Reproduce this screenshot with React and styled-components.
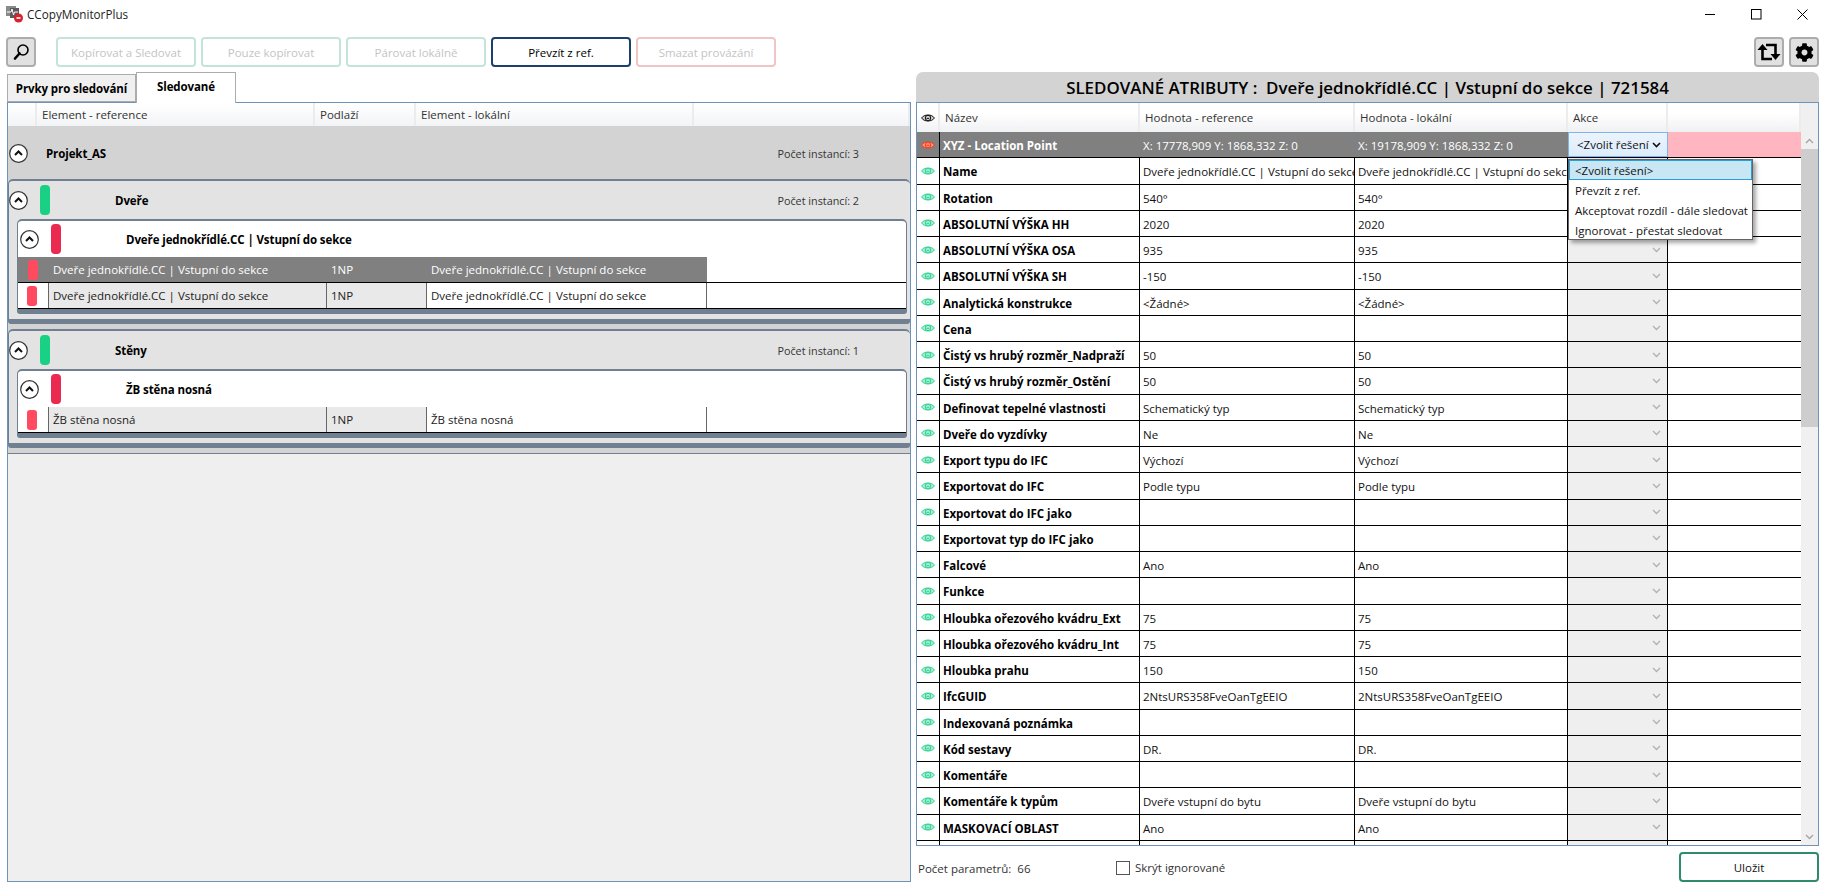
import React from 'react';
import styled, { createGlobalStyle } from 'styled-components';
import { FaCog } from 'react-icons/fa';

const GlobalStyle = createGlobalStyle`
	html, body {
		margin: 0;
		padding: 0;
		background: #fff;
		font-family: 'Open Sans', 'Liberation Sans', sans-serif;
		font-size: 11.5px;
		color: #111;
	}
	* {
		box-sizing: border-box;
	}
`;

const Window = styled.div`
	width: 1825px;
	height: 889px;
	display: flex;
	flex-direction: column;
	overflow: hidden;
	background: #fff;
`;

const TitleBar = styled.div`
	height: 28px;
	margin-bottom: 9px;
	display: flex;
	align-items: center;
	padding-left: 5px;
	font-size: 11.7px;
	color: #222;
`;

const AppName = styled.span`
	margin-left: 3px;
	flex: 1;
`;

const CaptionButton = styled.div`
	width: 46px;
	height: 28px;
	display: flex;
	align-items: center;
	justify-content: center;
`;

const Toolbar = styled.div`
	height: 30px;
	margin: 0 6px 5px;
	display: flex;
	align-items: stretch;
	gap: 5px;
`;

const IconButton = styled.button`
	width: 30px;
	padding: 0;
	display: flex;
	align-items: center;
	justify-content: center;
	background: #e1e1e1;
	border: 2px solid #adadad;
	border-radius: 4px;
	color: #000;
`;

const ActionButton = styled.button`
	width: 140px;
	padding: 0;
	background: #fff;
	border: 2px solid ${(props) => props.$border};
	border-radius: 4px;
	font: inherit;
	font-size: 11.5px;
	color: ${(props) => (props.$active ? '#000' : '#c4c4c4')};
	margin-left: ${(props) => (props.$first ? '15px' : '0')};
`;

const Spacer = styled.div`
	flex: 1;
`;

const Main = styled.div`
	flex: 1;
	min-height: 0;
	display: flex;
	padding: 0 6px 7px 7px;
	gap: 5px;
`;

const LeftSide = styled.div`
	width: 904px;
	display: flex;
	flex-direction: column;
`;

const Tabs = styled.div`
	height: 30px;
	display: flex;
	align-items: flex-end;
`;

const Tab = styled.div`
	height: ${(props) => (props.$active ? '31px' : '28px')};
	width: ${(props) => (props.$active ? '100px' : '129px')};
	margin-bottom: ${(props) => (props.$active ? '-1px' : '0')};
	position: relative;
	display: flex;
	align-items: center;
	justify-content: center;
	padding-bottom: ${(props) => (props.$active ? '4px' : '0')};
	font-size: 11.5px;
	letter-spacing: -0.1px;
	font-weight: 700;
	background: ${(props) => (props.$active ? '#fff' : '#f0f0f0')};
	border: 1px solid #acacac;
	border-bottom: ${(props) => (props.$active ? 'none' : '1px solid #acacac')};
	color: #000;
`;

const LeftPanel = styled.div`
	flex: 1;
	background: #efefef;
	border: 1px solid #6d93b8;
`;

const LeftHead = styled.div`
	height: 23px;
	display: grid;
	grid-template-columns: 29px 278px 101px 278px 1fr;
	background: linear-gradient(#ffffff, #f3f4f6);
	color: #333;
`;

const HeadCell = styled.div`
	display: flex;
	align-items: center;
	padding-left: 5px;
	border-right: 2px solid #ececec;
	white-space: nowrap;
`;

const ProjectGroup = styled.div`
	background: #d3d3d3;
	border-bottom: 1px solid #708090;
	padding-bottom: 5px;
`;

const GroupHeader = styled.div`
	height: ${(props) => props.$height}px;
	display: flex;
	align-items: center;
	padding-top: ${(props) => props.$top || 0}px;
	padding-left: ${(props) => props.$indent}px;
	padding-right: ${(props) => props.$right}px;
`;

const GroupTitle = styled.div`
	margin-left: ${(props) => props.$offset}px;
	flex: 1;
	font-size: 11.5px;
	letter-spacing: -0.1px;
	font-weight: 700;
	color: #000;
`;

const InstanceCount = styled.div`
	font-size: 10.8px;
	color: #333;
	white-space: nowrap;
`;

const CategoryGroup = styled.div`
	background: #e3e3e3;
	border: 1px solid #708090;
	border-top-width: 2px;
	border-bottom-width: 5px;
	border-right: none;
	border-radius: 5px 5px 3px 3px;
	margin-bottom: ${(props) => (props.$last ? '0' : '5px')};
	padding-bottom: 5px;
`;

const TypeGroup = styled.div`
	background: #fff;
	border: 1px solid #708090;
	border-top-width: 2px;
	border-bottom-width: 5px;
	border-radius: 5px 5px 3px 3px;
	width: 890px;
	margin-left: 8px;
`;

const StatusBar = styled.div`
	width: 10px;
	height: 30px;
	margin-left: 12px;
	border-radius: 4px;
	background: ${(props) => props.$color};
`;

const ElementRow = styled.div`
	height: 26px;
	display: grid;
	grid-template-columns: 31px 278px 100px 280px 1fr;
	border-bottom: 1.5px solid #000;
`;

const MarkCell = styled.div`
	display: flex;
	align-items: center;
	justify-content: center;
	padding-right: 2px;
	background: ${(props) => (props.$selected ? '#808080' : '#fff')};
	border-right: ${(props) => (props.$selected ? 'none' : '1px solid #666')};
`;

const RowMark = styled.div`
	width: 10px;
	height: 20px;
	border-radius: 3px;
	background: #ff4a5f;
`;

const ElementCell = styled.div`
	display: flex;
	align-items: center;
	padding-left: 4px;
	white-space: nowrap;
	overflow: hidden;
	color: ${(props) => (props.$selected ? '#fff' : '#222')};
	background: ${(props) => (props.$selected ? '#808080' : props.$shaded ? '#e9e9e9' : '#fff')};
	border-right: ${(props) => (props.$selected ? 'none' : '1px solid #666')};
`;

const RightSide = styled.div`
	flex: 1;
	min-width: 0;
	display: flex;
	flex-direction: column;
`;

const PanelTitle = styled.div`
	height: 30px;
	display: flex;
	align-items: center;
	justify-content: center;
	background: #d3d3d3;
	border-radius: 7px 7px 0 0;
	font-size: 16.9px;
	font-weight: 600;
	color: #000;
	white-space: pre;
`;

const AttributeTable = styled.div`
	height: 744px;
	display: flex;
	border: 1px solid #6d93b8;
	overflow: hidden;
`;

const TableBody = styled.div`
	flex: 1;
	min-width: 0;
`;

const AttributeHead = styled.div`
	height: 29px;
	display: grid;
	grid-template-columns: 23px 200px 215px 213px 100px 1fr;
	background: linear-gradient(#ffffff 35%, #f0f1f3);
	color: #333;
`;

const AttributeRow = styled.div`
	height: 26.26px;
	display: grid;
	grid-template-columns: 23px 200px 215px 213px 100px 1fr;
	background: ${(props) => (props.$selected ? '#808080' : '#fff')};
	border-bottom: 1.5px solid #000;
`;

const EyeCell = styled.div`
	display: flex;
	align-items: center;
	justify-content: center;
	border-right: ${(props) => (props.$head ? '2px solid #ececec' : '1px solid #000')};
`;

const NameCell = styled.div`
	display: flex;
	align-items: center;
	padding: 2px 0 0 3px;
	font-size: 11.5px;
	font-weight: 700;
	white-space: nowrap;
	overflow: hidden;
	color: ${(props) => (props.$selected ? '#fff' : '#000')};
	border-right: ${(props) => (props.$selected ? 'none' : '1px solid #000')};
`;

const ValueCell = styled.div`
	display: flex;
	align-items: center;
	padding: 2px 0 0 3px;
	white-space: nowrap;
	overflow: hidden;
	color: ${(props) => (props.$selected ? '#fff' : '#111')};
	border-right: ${(props) => (props.$selected ? 'none' : '1px solid #000')};
`;

const ActionCell = styled.div`
	position: relative;
	display: flex;
	align-items: center;
	justify-content: flex-end;
	padding-right: 6px;
	background: #efefef;
	color: #b0b0b0;
	border-right: 1px solid #000;
`;

const OpenCombo = styled.div`
	position: relative;
	display: flex;
	align-items: center;
	justify-content: space-between;
	padding: 0 6px 0 8px;
	color: #111;
	background: linear-gradient(#ecf4fc, #dcecfc);
	border: 1px solid #7eb4ea;
`;

const ComboPopup = styled.div`
	position: absolute;
	z-index: 2;
	left: -1px;
	top: 26px;
	width: 185px;
	height: 81px;
	padding: 0;
	background: #fff;
	border: 1px solid #646464;
	box-shadow: 3px 3px 4px rgba(0, 0, 0, 0.35);
`;

const PopupItem = styled.div`
	height: 20px;
	display: flex;
	align-items: center;
	padding-left: ${(props) => (props.$current ? '5px' : '6px')};
	white-space: nowrap;
	color: #111;
	background: ${(props) => (props.$current ? '#c9e6f5' : 'transparent')};
	border: ${(props) => (props.$current ? '1px solid #26a0da' : 'none')};
`;

const PinkCell = styled.div`
	background: #ffb6c1;
`;

const BlankCell = styled.div``;

const Scrollbar = styled.div`
	width: 17px;
	display: flex;
	flex-direction: column;
	align-items: stretch;
	background: #f0f0f0;
`;

const ScrollArrow = styled.div`
	height: 17px;
	display: flex;
	align-items: center;
	justify-content: center;
	color: #a3a3a3;
	margin-top: ${(props) => (props.$top ? '29px' : '0')};
`;

const ScrollThumb = styled.div`
	height: 278px;
	background: #cdcdcd;
`;

const Footer = styled.div`
	flex: 1;
	display: flex;
	align-items: flex-start;
	padding: 6px 0 0 2px;
`;

const ParamCount = styled.div`
	width: 198px;
	padding-top: 9px;
	color: #333;
	white-space: pre;
`;

const HideCheck = styled.label`
	display: flex;
	align-items: center;
	gap: 5px;
	padding-top: 8px;
	color: #333;
`;

const CheckBox = styled.span`
	width: 14px;
	height: 14px;
	background: #fff;
	border: 1px solid #555;
`;

const SaveButton = styled.button`
	width: 140px;
	height: 30px;
	padding: 0;
	background: #fff;
	border: 2px solid #2e8b6b;
	border-radius: 4px;
	font: inherit;
	color: #111;
`;

const Toggle = () => (
	<svg width='19' height='19' viewBox='0 0 19 19' style={{ flex: 'none' }}>
		<circle cx='9.5' cy='9.5' r='8.8' fill='#fff' stroke='#333' strokeWidth='1.2' />
		<path d='M6 11 L9.5 7.5 L13 11' fill='none' stroke='#111' strokeWidth='2' />
	</svg>
);

const Eye = ({ stroke, fill }) => (
	<svg width='14' height='10' viewBox='0 0 14 10'>
		<path d='M0.6 5 C3 1 11 1 13.4 5 C11 9 3 9 0.6 5 Z' fill={fill} stroke={stroke} strokeWidth='1' />
		<circle cx='7' cy='5' r='2.7' fill={fill} stroke={stroke} strokeWidth='1' />
		<path d='M5.6 5.4 H8.2' stroke={stroke} strokeWidth='1' />
	</svg>
);

const Chevron = ({ up, color = 'currentColor', width = 1.3 }) => (
	<svg width='9' height='6' viewBox='0 0 9 6'>
		<path d={up ? 'M1 5 L4.5 1.5 L8 5' : 'M1 1 L4.5 4.5 L8 1'} fill='none' stroke={color} strokeWidth={width} />
	</svg>
);

const AppIcon = () => (
	<svg width='19' height='19' viewBox='0 0 19 19'>
		<rect x='1' y='1' width='10' height='10' fill='#8a8a8a' />
		<rect x='5' y='3' width='9' height='10' fill='#5c5c5c' />
		<path d='M2 7 H6 L7 4 L8.5 10 L9.5 7 H13' fill='none' stroke='#fff' strokeWidth='1' />
		<circle cx='13.5' cy='13' r='4.5' fill='#d8232f' />
		<path d='M11.5 13 H15.5' stroke='#fff' strokeWidth='1.6' />
	</svg>
);

const SearchGlyph = () => (
	<svg width='20' height='20' viewBox='0 0 20 20'>
		<circle cx='12' cy='8' r='5' fill='none' stroke='#000' strokeWidth='1.6' />
		<path d='M8.5 11.5 L4 16.5' stroke='#000' strokeWidth='2.6' strokeLinecap='round' />
	</svg>
);

const RetweetGlyph = () => (
	<svg width='24' height='22' viewBox='0 0 24 22'>
		<path d='M5.5 8 V18 H15' fill='none' stroke='#000' strokeWidth='2.6' />
		<path d='M0.5 9 L5.5 3 L10.5 9 Z' fill='#000' />
		<path d='M9 4 H18.5 V14' fill='none' stroke='#000' strokeWidth='2.6' />
		<path d='M13.5 13 L18.5 19 L23.5 13 Z' fill='#000' />
	</svg>
);

const Minimize = () => (
	<svg width='11' height='11' viewBox='0 0 11 11'>
		<path d='M0 5.5 H10' stroke='#000' strokeWidth='1' />
	</svg>
);

const Maximize = () => (
	<svg width='11' height='11' viewBox='0 0 11 11'>
		<rect x='0.5' y='0.5' width='9.5' height='9.5' fill='none' stroke='#000' strokeWidth='1' />
	</svg>
);

const CloseGlyph = () => (
	<svg width='11' height='11' viewBox='0 0 11 11'>
		<path d='M0.5 0.5 L10.5 10.5 M10.5 0.5 L0.5 10.5' stroke='#000' strokeWidth='1' />
	</svg>
);

const DOOR = 'Dveře jednokřídlé.CC | Vstupní do sekce';
const WALL = 'ŽB stěna nosná';
const SCHEMA = 'Schematický typ';

const attributes = [
	['Name', DOOR],
	['Rotation', '540°'],
	['ABSOLUTNÍ VÝŠKA HH', '2020'],
	['ABSOLUTNÍ VÝŠKA OSA', '935'],
	['ABSOLUTNÍ VÝŠKA SH', '-150'],
	['Analytická konstrukce', '<Žádné>'],
	['Cena', ''],
	['Čistý vs hrubý rozměr_Nadpraží', '50'],
	['Čistý vs hrubý rozměr_Ostění', '50'],
	['Definovat tepelné vlastnosti', SCHEMA],
	['Dveře do vyzdívky', 'Ne'],
	['Export typu do IFC', 'Výchozí'],
	['Exportovat do IFC', 'Podle typu'],
	['Exportovat do IFC jako', ''],
	['Exportovat typ do IFC jako', ''],
	['Falcové', 'Ano'],
	['Funkce', ''],
	['Hloubka ořezového kvádru_Ext', '75'],
	['Hloubka ořezového kvádru_Int', '75'],
	['Hloubka prahu', '150'],
	['IfcGUID', '2NtsURS358FveOanTgEEIO'],
	['Indexovaná poznámka', ''],
	['Kód sestavy', 'DR.'],
	['Komentáře', ''],
	['Komentáře k typům', 'Dveře vstupní do bytu'],
	['MASKOVACÍ OBLAST', 'Ano'],
	['', ''],
];

const toolbarButtons = [
	['Kopírovat a Sledovat', '#c3e4da'],
	['Pouze kopírovat', '#c3e4da'],
	['Párovat lokálně', '#c3e4da'],
	['Převzít z ref.', '#1c3f6e', true],
	['Smazat provázání', '#efc5c5'],
];

const Element = ({ name, selected, shadeName }) => (
	<ElementRow>
		<MarkCell $selected={selected}>
			<RowMark />
		</MarkCell>
		<ElementCell $selected={selected} $shaded>
			{name}
		</ElementCell>
		<ElementCell $selected={selected} $shaded={shadeName}>
			1NP
		</ElementCell>
		<ElementCell $selected={selected}>{name}</ElementCell>
		<BlankCell />
	</ElementRow>
);

const CountedHeader = ({ title, count, bar, offset, height, indent, right, top }) => (
	<GroupHeader $height={height} $indent={indent} $right={right} $top={top}>
		<Toggle />
		{bar && <StatusBar $color={bar} />}
		<GroupTitle $offset={offset}>{title}</GroupTitle>
		{count && <InstanceCount>{count}</InstanceCount>}
	</GroupHeader>
);

export default function App() {
	return (
		<Window>
			<GlobalStyle />
			<TitleBar>
				<AppIcon />
				<AppName>CCopyMonitorPlus</AppName>
				<CaptionButton><Minimize /></CaptionButton>
				<CaptionButton><Maximize /></CaptionButton>
				<CaptionButton><CloseGlyph /></CaptionButton>
			</TitleBar>
			<Toolbar>
				<IconButton><SearchGlyph /></IconButton>
				{toolbarButtons.map(([label, border, active], i) => (
					<ActionButton key={label} $border={border} $active={active} $first={i === 0}>
						{label}
					</ActionButton>
				))}
				<Spacer />
				<IconButton><RetweetGlyph /></IconButton>
				<IconButton><FaCog size={19} /></IconButton>
			</Toolbar>
			<Main>
				<LeftSide>
					<Tabs>
						<Tab>Prvky pro sledování</Tab>
						<Tab $active>Sledované</Tab>
					</Tabs>
					<LeftPanel>
						<LeftHead>
							<HeadCell />
							<HeadCell>Element - reference</HeadCell>
							<HeadCell>Podlaží</HeadCell>
							<HeadCell>Element - lokální</HeadCell>
							<HeadCell />
						</LeftHead>
						<ProjectGroup>
							<CountedHeader
								title='Projekt_AS'
								count='Počet instancí: 3'
								offset={18}
								height={53}
								indent={1}
								right={51}
								top={2}
							/>
							<CategoryGroup>
								<CountedHeader
									title='Dveře'
									count='Počet instancí: 2'
									bar='#19d184'
									offset={65}
									height={38}
									indent={0}
									right={51}
								/>
								<TypeGroup>
									<CountedHeader title={DOOR} bar='#ea2a50' offset={65} height={36} indent={2} right={0} />
									<Element name={DOOR} selected />
									<Element name={DOOR} shadeName />
								</TypeGroup>
							</CategoryGroup>
							<CategoryGroup $last>
								<CountedHeader
									title='Stěny'
									count='Počet instancí: 1'
									bar='#19d184'
									offset={65}
									height={38}
									indent={0}
									right={51}
								/>
								<TypeGroup>
									<CountedHeader title={WALL} bar='#ea2a50' offset={65} height={36} indent={2} right={0} />
									<Element name={WALL} shadeName />
								</TypeGroup>
							</CategoryGroup>
						</ProjectGroup>
					</LeftPanel>
				</LeftSide>
				<RightSide>
					<PanelTitle>{'SLEDOVANÉ ATRIBUTY :  Dveře jednokřídlé.CC | Vstupní do sekce | 721584'}</PanelTitle>
					<AttributeTable>
						<TableBody>
							<AttributeHead>
								<EyeCell $head><Eye stroke='#111' fill='#cfcfcf' /></EyeCell>
								<HeadCell>Název</HeadCell>
								<HeadCell>Hodnota - reference</HeadCell>
								<HeadCell>Hodnota - lokální</HeadCell>
								<HeadCell>Akce</HeadCell>
								<HeadCell />
							</AttributeHead>
							<AttributeRow $selected>
								<EyeCell><Eye stroke='#f4411e' fill='#ff8f78' /></EyeCell>
								<NameCell $selected>XYZ - Location Point</NameCell>
								<ValueCell $selected>X: 17778,909 Y: 1868,332 Z: 0</ValueCell>
								<ValueCell $selected>X: 19178,909 Y: 1868,332 Z: 0</ValueCell>
								<OpenCombo>
									{'<Zvolit řešení'}
									<Chevron color='#111' width={1.6} />
									<ComboPopup>
										<PopupItem $current>{'<Zvolit řešení>'}</PopupItem>
										<PopupItem>Převzít z ref.</PopupItem>
										<PopupItem>Akceptovat rozdíl - dále sledovat</PopupItem>
										<PopupItem>Ignorovat - přestat sledovat</PopupItem>
									</ComboPopup>
								</OpenCombo>
								<PinkCell />
							</AttributeRow>
							{attributes.map(([name, value], i) => (
								<AttributeRow key={i}>
									<EyeCell>{name && <Eye stroke='#30d496' fill='#a8ecd0' />}</EyeCell>
									<NameCell>{name}</NameCell>
									<ValueCell>{value}</ValueCell>
									<ValueCell>{value}</ValueCell>
									<ActionCell>
										<Chevron />
									</ActionCell>
									<BlankCell />
								</AttributeRow>
							))}
						</TableBody>
						<Scrollbar>
							<ScrollArrow $top><Chevron up /></ScrollArrow>
							<ScrollThumb />
							<Spacer />
							<ScrollArrow><Chevron /></ScrollArrow>
						</Scrollbar>
					</AttributeTable>
					<Footer>
						<ParamCount>{'Počet parametrů:  66'}</ParamCount>
						<HideCheck>
							<CheckBox />
							Skrýt ignorované
						</HideCheck>
						<Spacer />
						<SaveButton>Uložit</SaveButton>
					</Footer>
				</RightSide>
			</Main>
		</Window>
	);
}
